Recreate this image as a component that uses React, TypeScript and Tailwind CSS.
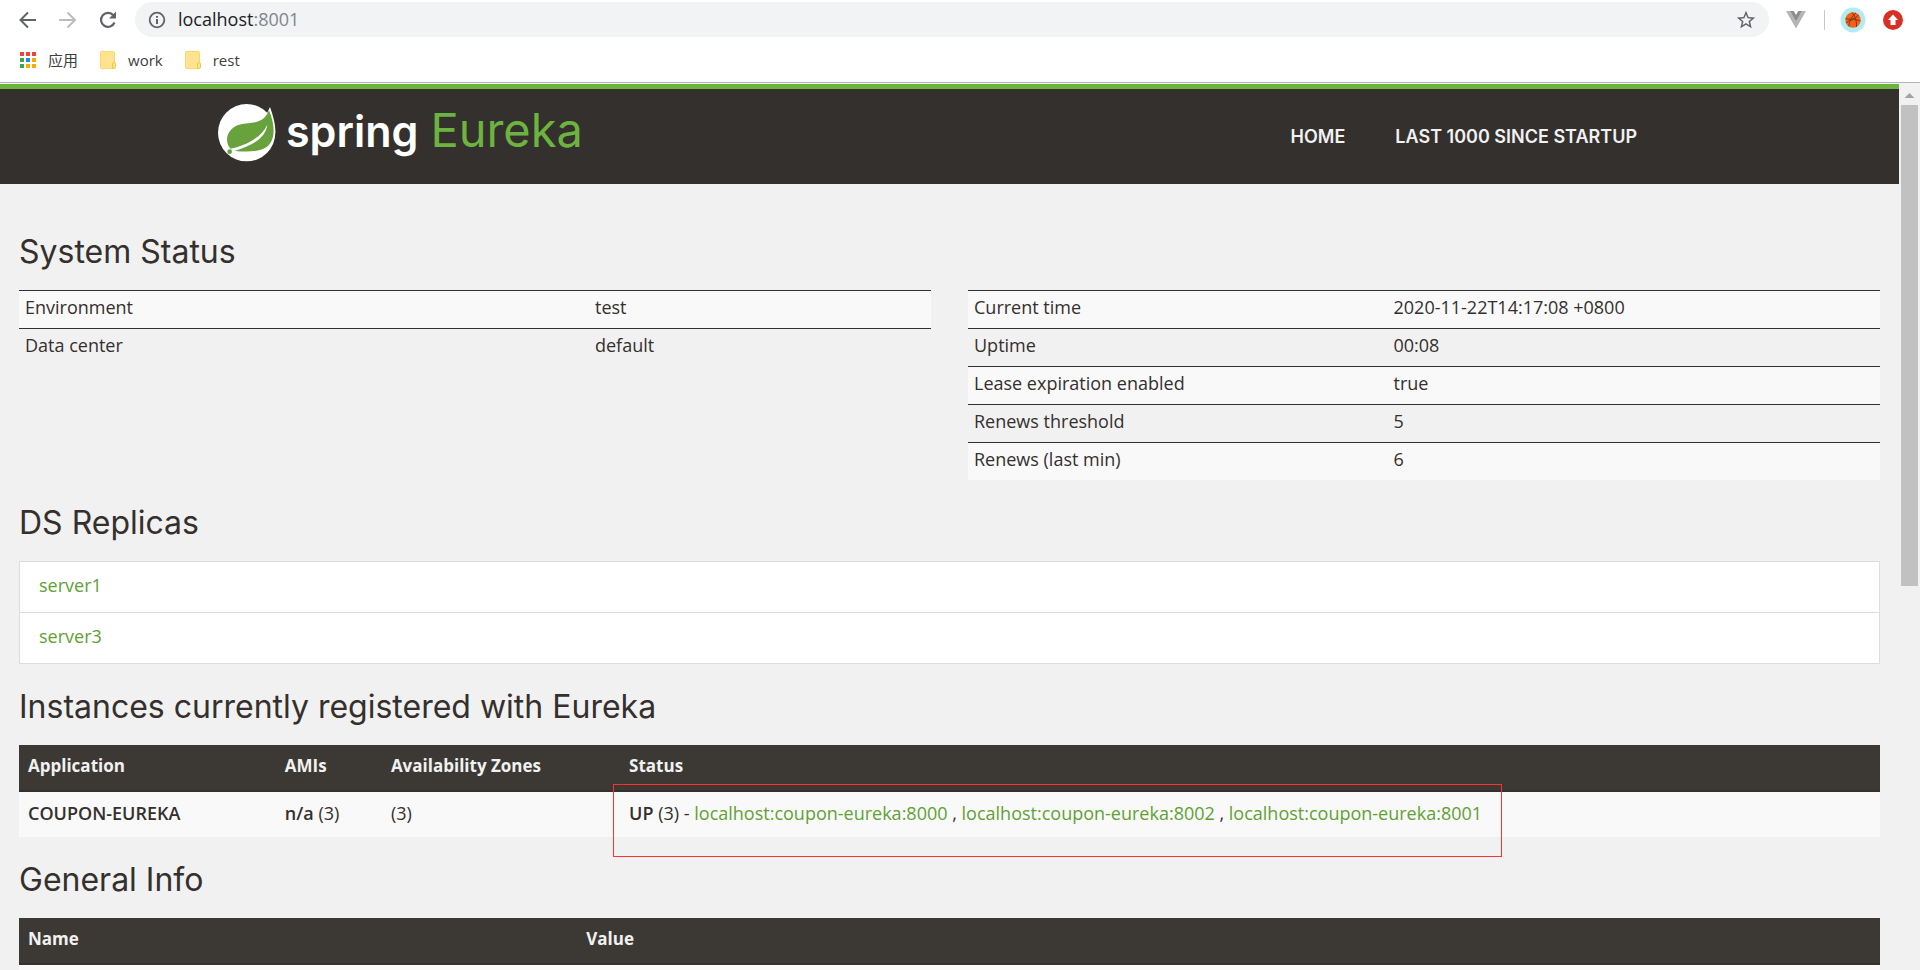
import React from "react";

const environment = [
  ["Environment", "test"],
  ["Data center", "default"],
];

const runtime = [
  ["Current time", "2020-11-22T14:17:08 +0800"],
  ["Uptime", "00:08"],
  ["Lease expiration enabled", "true"],
  ["Renews threshold", "5"],
  ["Renews (last min)", "6"],
];

const replicas = ["server1", "server3"];

const instances = [
  "localhost:coupon-eureka:8000",
  "localhost:coupon-eureka:8002",
  "localhost:coupon-eureka:8001",
];

function AppsIcon() {
  const colors = ["#f44336", "#f44336", "#f44336", "#34a853", "#1e88e5", "#fbab00", "#34a853", "#fbab00", "#fbab00"];
  return (
    <svg width="18" height="18" viewBox="0 0 18 18" aria-hidden="true">
      {colors.map((c, i) => (
        <rect key={i} x={1 + (i % 3) * 6} y={1 + Math.floor(i / 3) * 6} width="4" height="4" fill={c} />
      ))}
    </svg>
  );
}

function FolderIcon() {
  return (
    <svg width="18" height="18" viewBox="0 0 18 18" aria-hidden="true">
      <path d="M1.500.500h12a1 1 0 0 1 1 1v10.500h0v4.500a1 1 0 0 1-1 1h-12a1 1 0 0 1-1-1v-15a1 1 0 0 1 1-1z" fill="#ffe391" stroke="#fad766" />
      <path d="M12.500 17.500v-4.500a1.500 1.500 0 0 1 3 0v3a1.500 1.500 0 0 1-1.500 1.500z" fill="#ffe391" stroke="#f2c744" />
    </svg>
  );
}

function SpringLogo() {
  return (
    <svg width="58" height="58" viewBox="53 71 174 174" aria-hidden="true">
      <circle cx="139" cy="157" r="86" fill="#fff" />
      <path d="M209 80C216 100 226 130 225 157L190 120Z" fill="#fff" />
      <path
        d="M206 90C198 110 186 121 165 126C138 131 112 128 92 148C76 165 76 190 92 207L104 212C135 215 176 216 199 200C228 178 223 130 206 90Z"
        fill="#68a23d"
      />
      <path d="M90 205C132 197 182 174 201 133C197 172 155 197 102 212Z" fill="#fff" />
      <circle cx="88" cy="214" r="7" fill="#68a23d" />
    </svg>
  );
}

function BrowserBar() {
  return (
    <div className="shrink-0 border-b border-[#b6b4b6] bg-white font-['Open_Sans','Noto_Sans_CJK_SC',sans-serif] text-[#3c4043]">
      <div className="flex h-[39px] items-center pr-[17px] pl-[18px]">
        <button aria-label="Back" className="mr-5">
          <svg className="block" width="20" height="20" viewBox="0 0 20 20" fill="none" stroke="#5f6368" strokeWidth="2">
            <path d="M18 10H3M10 2.500L2.500 10l7.500 7.500" />
          </svg>
        </button>
        <button aria-label="Forward" className="mr-5">
          <svg className="block" width="20" height="20" viewBox="0 0 20 20" fill="none" stroke="#babcbe" strokeWidth="2">
            <path d="M1 10h15.500M9.500 2.500L17 10l-7.500 7.500" />
          </svg>
        </button>
        <button aria-label="Reload" className="mr-[17px]">
          <svg className="block" width="20" height="20" viewBox="0 0 20 20">
            <path d="M16.500 12.500A7 7 0 1 1 15.500 5.500" fill="none" stroke="#5f6368" strokeWidth="2.200" />
            <path d="M18 1.500v7h-7z" fill="#5f6368" />
          </svg>
        </button>
        <div className="flex h-[35px] flex-1 items-center rounded-full bg-[#f1f3f4] pr-3 pl-[13px]">
          <svg className="mr-3 shrink-0" width="18" height="18" viewBox="0 0 18 18" aria-hidden="true">
            <circle cx="9" cy="9" r="7.300" fill="none" stroke="#5f6368" strokeWidth="1.800" />
            <path d="M9 8v5M9 5v1.800" stroke="#5f6368" strokeWidth="2" />
          </svg>
          <span className="flex-1 pb-0.5 text-lg leading-6 text-[#202124]">
            localhost<span className="text-[#80868b]">:8001</span>
          </span>
          <button aria-label="Bookmark this page">
            <svg className="block" width="22" height="22" viewBox="0 0 24 24" fill="#5f6368">
              <path d="M22 9.240l-7.190-.62L12 2 9.190 8.630 2 9.240l5.460 4.730L5.820 21 12 17.270 18.180 21l-1.630-7.030L22 9.240zM12 15.400l-3.760 2.270 1-4.280-3.320-2.880 4.380-.38L12 6.100l1.710 4.040 4.380.38-3.320 2.880 1 4.280L12 15.400z" />
            </svg>
          </button>
        </div>
        <button aria-label="Vue devtools" className="ml-[17px]">
          <svg className="block" width="20" height="18" viewBox="0 0 20 18">
            <path d="M0 0h4l6 10.500L16 0h4L10 17.500z" fill="#b5b5b5" />
            <path d="M4 0h3.700L10 4l2.300-4H16l-6 10.500z" fill="#8c8c8c" />
          </svg>
        </button>
        <span className="ml-[18px] h-5 w-px bg-[#c6c8ca]" />
        <button aria-label="Profile" className="ml-[15px]">
          <svg className="block" width="26" height="26" viewBox="0 0 26 26">
            <circle cx="13" cy="13" r="12.500" fill="#b2ebf2" />
            <circle cx="13" cy="13" r="7.700" fill="#f4611a" />
            <path d="M5.500 11.500C10 13 16 12 18.500 8M12 5.400C15 9 17 14 16.500 20M6 16C10 12 16 12 20.500 14M9 19.500C9 14 12 9 16 6" fill="none" stroke="#7a3418" strokeWidth="0.900" />
          </svg>
        </button>
        <button aria-label="Update" className="ml-[17px]">
          <svg className="block" width="20" height="20" viewBox="0 0 20 20">
            <circle cx="10" cy="10" r="10" fill="#d93025" />
            <path d="M10 4.500l5 5.500h-2.500v5h-5v-5H5z" fill="#fff" />
          </svg>
        </button>
      </div>
      <div className="flex h-[43px] items-center gap-[22px] pb-px pl-[19px] text-[15px] leading-5">
        <a href="#apps" className="flex items-center gap-[11px]">
          <AppsIcon />
          应用
        </a>
        <a href="#work" className="flex items-center gap-[10px]">
          <FolderIcon />
          work
        </a>
        <a href="#rest" className="flex items-center gap-[10px]">
          <FolderIcon />
          rest
        </a>
      </div>
    </div>
  );
}

function Heading({ children }: { children: React.ReactNode }) {
  return <h1 className="mt-[25px] mb-5 font-['Inter',sans-serif] text-[32px] leading-9">{children}</h1>;
}

function InfoTable({ rows, labelWidth }: { rows: string[][]; labelWidth: string }) {
  return (
    <table className="w-full table-fixed border-collapse">
      <tbody>
        {rows.map(([name, value]) => (
          <tr key={name} className="border-t border-[#34302d] odd:bg-[#f9f9f9]">
            <td className={`${labelWidth} px-[6px] pt-1 pb-[9px]`}>{name}</td>
            <td className="px-[6px] pt-1 pb-[9px]">{value}</td>
          </tr>
        ))}
      </tbody>
    </table>
  );
}

const th = "border-b-2 border-[#34302d] px-[9px] pt-[9px] pb-3 text-left text-[17px] leading-6 font-bold";
const td = "px-[9px] pt-[9px] pb-3";

export default function App() {
  return (
    <div className="flex h-screen flex-col overflow-hidden">
      <BrowserBar />
      <div className="flex min-h-0 flex-1 bg-[#f1f1f1] pt-px">
        <div className="min-w-0 flex-1 overflow-hidden font-['Open_Sans',sans-serif] text-[18px] leading-6 text-[#34302d]">
          <header className="border-t-[5px] border-[#6db33f] bg-[#34302d] font-['Inter',sans-serif]">
            <div className="mx-auto flex h-[95px] max-w-[1463px] items-start justify-between">
              <a href="#home" className="flex items-start pt-[15px]">
                <SpringLogo />
                <span className="ml-[10px] flex items-baseline gap-3 leading-[52px]">
                  <span className="text-[43px] font-semibold text-white">spring</span>
                  <span className="text-[47px] text-[#6db33f]">Eureka</span>
                </span>
              </a>
              <nav className="flex gap-[50px] pt-9 pr-11 font-semibold text-[#f1f1f1]">
                <a href="#home">HOME</a>
                <a href="#lastn">LAST 1000 SINCE STARTUP</a>
              </nav>
            </div>
          </header>

          <main className="px-[19px] pt-[25px]">
            <Heading>System Status</Heading>
            <div className="grid grid-cols-2 gap-[37px]">
              <div>
                <InfoTable rows={environment} labelWidth="w-[62.5%]" />
              </div>
              <div>
                <InfoTable rows={runtime} labelWidth="w-[46%]" />
              </div>
            </div>

            <Heading>DS Replicas</Heading>
            <ul className="divide-y divide-[#ddd] border border-[#ddd] bg-white">
              {replicas.map((name) => (
                <li key={name} className="px-[19px] pt-[11px] pb-[15px]">
                  <a href="#replica" className="text-[#5fa134]">
                    {name}
                  </a>
                </li>
              ))}
            </ul>

            <Heading>Instances currently registered with Eureka</Heading>
            <table className="w-full table-fixed border-separate border-spacing-0">
              <thead className="bg-[#3c3934] text-[#f1f1f1]">
                <tr>
                  <th className={`${th} w-[13.8%]`}>Application</th>
                  <th className={`${th} w-[5.7%]`}>AMIs</th>
                  <th className={`${th} w-[12.8%]`}>Availability Zones</th>
                  <th className={th}>Status</th>
                </tr>
              </thead>
              <tbody className="bg-[#f9f9f9]">
                <tr>
                  <td className={`${td} font-semibold`}>COUPON-EUREKA</td>
                  <td className={td}>
                    <b className="font-semibold">n/a</b> (3)
                  </td>
                  <td className={td}>(3)</td>
                  <td className={td}>
                    <div className="relative w-fit whitespace-nowrap">
                      <b className="font-semibold">UP</b> (3) -{" "}
                      {instances.map((name, i) => (
                        <React.Fragment key={name}>
                          {i > 0 && " , "}
                          <a href="#instance" className="text-[#5fa134]">
                            {name}
                          </a>
                        </React.Fragment>
                      ))}
                      <span className="pointer-events-none absolute -top-[17px] -right-5 -bottom-8 -left-4 border border-[#ff3030]" />
                    </div>
                  </td>
                </tr>
              </tbody>
            </table>

            <Heading>General Info</Heading>
            <table className="w-full table-fixed border-separate border-spacing-0">
              <thead className="bg-[#3c3934] text-[#f1f1f1]">
                <tr>
                  <th className={`${th} w-[30%]`}>Name</th>
                  <th className={th}>Value</th>
                </tr>
              </thead>
              <tbody className="bg-[#f9f9f9]">
                <tr>
                  <td className={td}>&nbsp;</td>
                  <td className={td}>&nbsp;</td>
                </tr>
              </tbody>
            </table>
          </main>
        </div>
        <div className="flex w-[21px] shrink-0 flex-col items-center bg-[#f1f1f1]">
          <svg className="shrink-0" width="21" height="21" viewBox="0 0 21 21" aria-hidden="true">
            <path d="M5.500 14L10.500 9l5 5z" fill="#a3a3a3" />
          </svg>
          <div className="h-[481px] w-[17px] bg-[#c1c1c1]" />
        </div>
      </div>
    </div>
  );
}
